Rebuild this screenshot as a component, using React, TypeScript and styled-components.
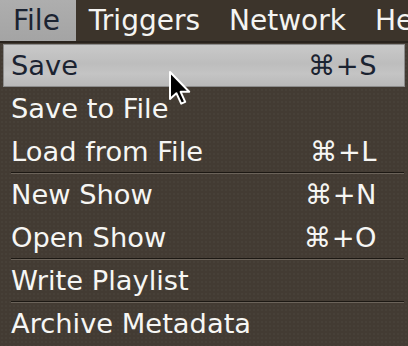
import React from "react";
import styled, { createGlobalStyle } from "styled-components";

const Global = createGlobalStyle`
  html, body { margin: 0; padding: 0; background: #3f372f; }
  body { font-family: "DejaVu Sans", "Liberation Sans", sans-serif; }
`;

const Screen = styled.div`
  position: relative;
  width: 408px;
  height: 346px;
  overflow: hidden;
  background: #433b33;
  background-image: radial-gradient(rgba(255,255,255,0.025) 1px, transparent 1px);
  background-size: 4px 4px;
`;

const MenuBar = styled.div`
  display: flex;
  height: 41px;
  background: #3c342b;
  border-bottom: 2px solid #29231d;
  white-space: nowrap;
`;

const BarItem = styled.div<{ $active?: boolean }>`
  display: flex;
  align-items: center;
  padding: 0 16px 0 13px;
  font-size: 28px;
  color: ${(p) => (p.$active ? "#1b2331" : "#f4f4f2")};
  background: ${(p) =>
    p.$active ? "linear-gradient(#aeaeae, #a4a4a4)" : "transparent"};
`;

const Menu = styled.div`
  display: flex;
  flex-direction: column;
  padding: 1px 3px 0 3px;
`;

const Row = styled.div<{ $selected?: boolean; $separator?: boolean }>`
  position: relative;
  display: flex;
  align-items: center;
  justify-content: space-between;
  height: 41px;
  padding: 0 27px 0 7px;
  font-size: 27.3px;
  color: ${(p) => (p.$selected ? "#1b2331" : "#f6f6f4")};
  background: ${(p) =>
    p.$selected
      ? "linear-gradient(#c9c9c9, #bdbdbd 45%, #c4c4c4 70%, #b9b9b9)"
      : "transparent"};
  border: 1px solid ${(p) => (p.$selected ? "#8c8c8c" : "transparent")};
  ${(p) =>
    p.$separator &&
    `
    &::after {
      content: "";
      position: absolute;
      left: 7px;
      right: 0;
      bottom: -1px;
      height: 1px;
      background: #1c1813;
      box-shadow: 0 1px 0 #6b635a;
    }
  `}
`;

const Shortcut = styled.span`
  letter-spacing: 0.5px;
`;

const Cursor = styled.svg`
  position: absolute;
  left: 168px;
  top: 70px;
`;

const items: { label: string; key?: string; sep?: boolean; sel?: boolean }[] = [
  { label: "Save", key: "⌘+S", sel: true },
  { label: "Save to File" },
  { label: "Load from File", key: "⌘+L", sep: true },
  { label: "New Show", key: "⌘+N" },
  { label: "Open Show", key: "⌘+O", sep: true },
  { label: "Write Playlist", sep: true },
  { label: "Archive Metadata" },
];

export default function App() {
  return (
    <>
      <Global />
      <Screen>
        <MenuBar>
          <BarItem $active>File</BarItem>
          <BarItem>Triggers</BarItem>
          <BarItem>Network</BarItem>
          <BarItem>Help</BarItem>
        </MenuBar>
        <Menu>
          {items.map((it) => (
            <Row key={it.label} $selected={it.sel} $separator={it.sep}>
              <span>{it.label}</span>
              {it.key && <Shortcut>{it.key}</Shortcut>}
            </Row>
          ))}
        </Menu>
        <Cursor width="26" height="36" viewBox="0 0 13 18">
          <path
            d="M1 1 L1 14.5 L4.2 11.6 L6.6 16.8 L8.6 15.9 L6.3 10.9 L10.6 10.9 Z"
            fill="#000"
            stroke="#fff"
            strokeWidth="1"
            strokeLinejoin="round"
          />
        </Cursor>
      </Screen>
    </>
  );
}
